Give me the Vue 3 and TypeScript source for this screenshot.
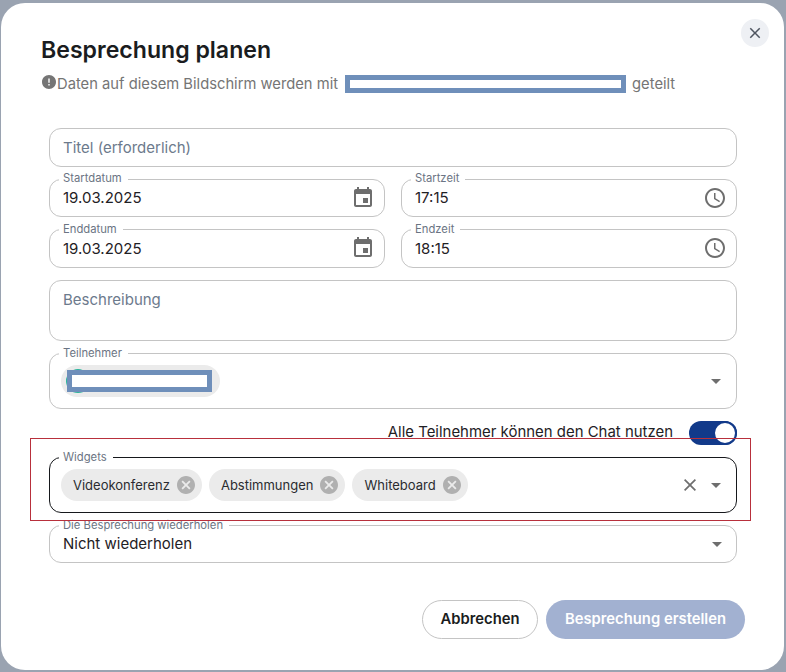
<script setup lang="ts">
const chips: string[] = ['Videokonferenz', 'Abstimmungen', 'Whiteboard']
const dateRows = [
  { dateLabel: 'Startdatum', date: '19.03.2025', timeLabel: 'Startzeit', time: '17:15' },
  { dateLabel: 'Enddatum', date: '19.03.2025', timeLabel: 'Endzeit', time: '18:15' },
]
</script>

<template>
  <div class="page">
    <div class="dialog">
      <button class="close" aria-label="Schließen">
        <svg viewBox="0 0 24 24" width="18" height="18"><path d="M19 6.41 17.59 5 12 10.59 6.41 5 5 6.41 10.59 12 5 17.59 6.41 19 12 13.41 17.59 19 19 17.59 13.41 12z" /></svg>
      </button>

      <header class="head">
        <h1>Besprechung planen</h1>
        <p class="notice">
          <svg class="notice-icon" viewBox="2 2 20 20" width="14" height="14"><path d="M12 2C6.48 2 2 6.48 2 12s4.48 10 10 10 10-4.48 10-10S17.52 2 12 2zm1 15h-2v-2h2v2zm0-4h-2V7h2v6z" /></svg>
          <span>Daten auf diesem Bildschirm werden mit</span>
          <span class="redact redact-notice"></span>
          <span>geteilt</span>
        </p>
      </header>

      <form class="form" @submit.prevent>
        <div class="field single"><span class="placeholder">Titel (erforderlich)</span></div>

        <div v-for="row in dateRows" :key="row.dateLabel" class="row">
          <div class="field single">
            <label class="legend">{{ row.dateLabel }}</label>
            <span class="value">{{ row.date }}</span>
            <svg class="adorn" viewBox="0 0 24 24" width="24" height="24"><path d="M17 12h-5v5h5v-5zM16 1v2H8V1H6v2H5c-1.11 0-1.99.9-1.99 2L3 19c0 1.1.89 2 2 2h14c1.1 0 2-.9 2-2V5c0-1.1-.9-2-2-2h-1V1h-2zm3 18H5V8h14v11z" /></svg>
          </div>
          <div class="field single">
            <label class="legend">{{ row.timeLabel }}</label>
            <span class="value">{{ row.time }}</span>
            <svg class="adorn" viewBox="0 0 24 24" width="24" height="24"><path d="M11.99 2C6.47 2 2 6.48 2 12s4.47 10 9.99 10C17.52 22 22 17.52 22 12S17.52 2 11.99 2zM12 20c-4.42 0-8-3.58-8-8s3.58-8 8-8 8 3.58 8 8-3.58 8-8 8zm.5-13H11v6l5.25 3.15.75-1.23-4.5-2.67z" /></svg>
          </div>
        </div>

        <div class="field area"><span class="placeholder">Beschreibung</span></div>

        <div class="field chips-field">
          <label class="legend">Teilnehmer</label>
          <div class="chip person">
            <span class="avatar"></span>
            <span class="redact redact-person"></span>
          </div>
          <span class="arrow"></span>
        </div>

        <div class="toggle-row">
          <span class="toggle-text">Alle Teilnehmer können den Chat nutzen</span>
          <span class="toggle"><span class="thumb"></span></span>
        </div>

        <div class="field chips-field focused">
          <label class="legend">Widgets</label>
          <div class="chip-list">
            <div v-for="chip in chips" :key="chip" class="chip">
              <span>{{ chip }}</span>
              <svg class="chip-del" viewBox="2 2 20 20" width="18" height="18"><path d="M12 2C6.47 2 2 6.47 2 12s4.47 10 10 10 10-4.47 10-10S17.53 2 12 2zm5 13.59L15.59 17 12 13.41 8.41 17 7 15.59 10.59 12 7 8.41 8.41 7 12 10.59 15.59 7 17 8.41 13.41 12 17 15.59z" /></svg>
            </div>
          </div>
          <svg class="clear" viewBox="5 5 14 14" width="12" height="12"><path d="M19 6.41 17.59 5 12 10.59 6.41 5 5 6.41 10.59 12 5 17.59 6.41 19 12 13.41 17.59 19 19 17.59 13.41 12z" /></svg>
          <span class="arrow"></span>
        </div>

        <div class="field single repeat">
          <label class="legend">Die Besprechung wiederholen</label>
          <span class="value">Nicht wiederholen</span>
          <span class="arrow arrow-wide"></span>
        </div>
      </form>

      <footer class="actions">
        <button class="btn cancel">Abbrechen</button>
        <button class="btn create">Besprechung erstellen</button>
      </footer>
    </div>
    <div class="highlight"></div>
  </div>
</template>

<style>
html, body { margin: 0; padding: 0; }
</style>

<style scoped>
.page {
  position: relative;
  box-sizing: border-box;
  width: 786px;
  height: 672px;
  padding: 3px 2px 2px 1px;
  background: #9aa3b1;
  font-family: Inter, "Liberation Sans", sans-serif;
  overflow: hidden;
}
.dialog {
  position: relative;
  box-sizing: border-box;
  height: 100%;
  background: #fff;
  border-radius: 24px;
  padding: 33px 47px 0 48px;
  display: flex;
  flex-direction: column;
}
.close {
  position: absolute;
  top: 16px;
  right: 15px;
  width: 28px;
  height: 28px;
  padding: 0;
  border: none;
  border-radius: 50%;
  background: #eef0f4;
  display: flex;
  align-items: center;
  justify-content: center;
}
.close svg { fill: #4f5560; }
.head { margin-left: -8px; }
h1 {
  margin: 0;
  font-size: 23.1px;
  line-height: 29px;
  font-weight: 600;
  color: #1a1c20;
}
.notice {
  margin: 9px 0 0;
  height: 20px;
  display: flex;
  align-items: center;
  font-size: 14.75px;
  line-height: 20px;
  color: #757575;
}
.notice-icon { fill: #757575; margin: 0 1px 5px 1px; }
.redact {
  display: block;
  box-sizing: border-box;
  background: #fff;
  border: 5px solid #6f8fba;
}
.redact-notice { width: 281px; height: 17.5px; margin: 0 6px 0 7px; }
.form {
  margin-top: 34px;
  display: flex;
  flex-direction: column;
  gap: 12px;
}
.row {
  display: grid;
  grid-template-columns: 336px 336px;
  gap: 16px;
}
.field {
  position: relative;
  box-sizing: border-box;
  border: 1px solid #c4c4c4;
  border-radius: 12px;
  display: flex;
  align-items: center;
  padding: 0 13px;
  font-size: 15px;
  color: #1f2125;
}
.single { height: 38.6px; }
.repeat { height: 38px; padding-bottom: 1px; }
.area { height: 61.5px; align-items: flex-start; padding-top: 9px; }
.chips-field { height: 56px; padding-left: 11px; }
.focused { border-color: #16181c; }
.legend {
  position: absolute;
  top: -8.5px;
  left: 9px;
  padding: 0 6px 0 4px;
  background: #fff;
  font-size: 11.25px;
  line-height: 14px;
  color: #6b7483;
}
.placeholder { color: #6c7a8c; }
.value { flex: 1; }
.adorn { fill: #6e6e6e; margin-right: -4px; flex: none; }
.arrow {
  position: absolute;
  right: 15px;
  top: 50%;
  margin-top: -2px;
  width: 0;
  height: 0;
  border-left: 5px solid transparent;
  border-right: 5px solid transparent;
  border-top: 5px solid #6e6e6e;
}
.arrow-wide { right: 14px; }
.chip-list { display: flex; gap: 7px; }
.chip {
  height: 32px;
  border-radius: 16px;
  background: #ebebeb;
  display: flex;
  align-items: center;
  gap: 7px;
  padding: 0 7px 0 12px;
  font-size: 13px;
  color: #2a2c30;
}
.chip-del { fill: #b0b0b0; flex: none; }
.person {
  position: relative;
  width: 158.5px;
  box-sizing: border-box;
  padding: 0 0 0 5px;
}
.avatar {
  width: 24px;
  height: 24px;
  border-radius: 50%;
  background: #2bb39b;
}
.redact-person {
  position: absolute;
  left: 6px;
  top: 5px;
  width: 145px;
  height: 22px;
}
.clear {
  position: absolute;
  right: 40px;
  top: 50%;
  margin-top: -6px;
  fill: #6e6e6e;
}
.toggle-row {
  height: 24px;
  display: flex;
  justify-content: flex-end;
  align-items: center;
  gap: 16px;
  font-size: 14.95px;
  color: #1f2125;
}
.toggle-text { margin-bottom: 2px; }
.toggle {
  position: relative;
  width: 48px;
  height: 24px;
  border-radius: 12px;
  background: #123a8a;
}
.thumb {
  position: absolute;
  right: 0;
  top: 0;
  width: 20px;
  height: 20px;
  border: 2px solid #123a8a;
  border-radius: 50%;
  background: #fff;
}
.actions {
  margin-top: 36.7px;
  margin-right: -8px;
  display: flex;
  justify-content: flex-end;
  gap: 8px;
}
.btn {
  height: 39px;
  border-radius: 20px;
  font-family: inherit;
  font-size: 14.8px;
  font-weight: 600;
}
.cancel {
  width: 116px;
  background: #fff;
  border: 1px solid #c4c4c4;
  color: #1a1c20;
}
.create {
  width: 199px;
  background: #a2b1d1;
  border: none;
  color: #fff;
}
.highlight {
  position: absolute;
  left: 30px;
  top: 438px;
  width: 719px;
  height: 81px;
  border: 1px solid #b8303c;
  pointer-events: none;
}
</style>
